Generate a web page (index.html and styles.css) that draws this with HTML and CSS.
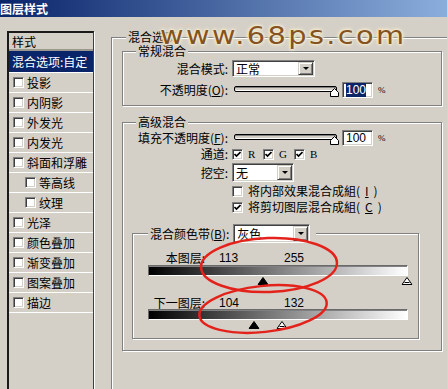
FILE: index.html
```html
<!DOCTYPE html>
<html lang="zh-CN">
<head>
    <meta charset="UTF-8">
    <meta name="viewport" content="width=device-width, initial-scale=1.0">
    <title>图层样式</title>
    <link rel="stylesheet" href="styles.css">
</head>
<body>
    <div class="titlebar">图层样式</div>

    <div class="dialog">
        <div class="style-list">
            <div class="list-head">样式</div>
            <div class="list-item selected">混合选项:自定</div>
            <div class="list-item"><span class="box"></span>投影</div>
            <div class="list-item"><span class="box"></span>内阴影</div>
            <div class="list-item"><span class="box"></span>外发光</div>
            <div class="list-item"><span class="box"></span>内发光</div>
            <div class="list-item"><span class="box"></span>斜面和浮雕</div>
            <div class="list-item sub"><span class="box"></span>等高线</div>
            <div class="list-item sub"><span class="box"></span>纹理</div>
            <div class="list-item"><span class="box"></span>光泽</div>
            <div class="list-item"><span class="box"></span>颜色叠加</div>
            <div class="list-item"><span class="box"></span>渐变叠加</div>
            <div class="list-item"><span class="box"></span>图案叠加</div>
            <div class="list-item"><span class="box"></span>描边</div>
        </div>

        <fieldset class="group main">
            <legend>混合选项</legend>

            <fieldset class="group general">
                <legend>常规混合</legend>
                <div class="form-grid general-grid">
                    <label>混合模式:</label>
                    <div class="combo mode"><span>正常</span><i class="drop"></i></div>

                    <label>不透明度(<u>O</u>):</label>
                    <div class="slider-row">
                        <div class="slider">
                            <span class="track"></span>
                            <svg class="thumb" width="9" height="9" viewBox="0 0 9 9"><path d="M4.5 0.5 L8.5 4.5 V8.5 H0.5 V4.5 Z" fill="#fff" stroke="#000"/></svg>
                        </div>
                        <div class="num"><span class="sel">100</span></div>
                        <span class="pct">%</span>
                    </div>
                </div>
            </fieldset>

            <fieldset class="group advanced">
                <legend>高级混合</legend>
                <div class="form-grid advanced-grid">
                    <label>填充不透明度(<u>F</u>):</label>
                    <div class="slider-row">
                        <div class="slider">
                            <span class="track"></span>
                            <svg class="thumb" width="9" height="9" viewBox="0 0 9 9"><path d="M4.5 0.5 L8.5 4.5 V8.5 H0.5 V4.5 Z" fill="#fff" stroke="#000"/></svg>
                        </div>
                        <div class="num">100</div>
                        <span class="pct">%</span>
                    </div>

                    <label>通道:</label>
                    <div class="channels">
                        <span class="cb on"><svg width="7" height="7" viewBox="0 0 7 7"><path d="M0.5 3 L2.5 5 L6.5 1" fill="none" stroke="#000" stroke-width="1.7"/></svg></span><span class="ch">R</span>
                        <span class="cb on"><svg width="7" height="7" viewBox="0 0 7 7"><path d="M0.5 3 L2.5 5 L6.5 1" fill="none" stroke="#000" stroke-width="1.7"/></svg></span><span class="ch">G</span>
                        <span class="cb on"><svg width="7" height="7" viewBox="0 0 7 7"><path d="M0.5 3 L2.5 5 L6.5 1" fill="none" stroke="#000" stroke-width="1.7"/></svg></span><span class="ch">B</span>
                    </div>

                    <label>挖空:</label>
                    <div class="combo knockout"><span>无</span><i class="drop"></i></div>

                    <div class="option"><span class="cb"></span>将内部效果混合成組(<u>I</u>)</div>
                    <div class="option"><span class="cb on"><svg width="7" height="7" viewBox="0 0 7 7"><path d="M0.5 3 L2.5 5 L6.5 1" fill="none" stroke="#000" stroke-width="1.7"/></svg></span>将剪切图层混合成組(<u>C</u>)</div>
                </div>

                <fieldset class="group band">
                    <legend>
                        <span>混合颜色带(<u>B</u>):</span>
                        <div class="combo gray"><span>灰色</span><i class="drop"></i></div>
                    </legend>

                    <div class="band-row first">
                        <span class="band-label">本图层:</span>
                        <span class="band-val">113</span>
                        <span class="band-val">255</span>
                    </div>
                    <div class="band-bar"></div>
                    <div class="band-thumbs">
                        <svg class="mark" style="left:44.3%" width="11" height="8" viewBox="0 0 11 8"><path d="M5.5 0.5 L10.5 7.5 H0.5 Z" fill="#000" stroke="#000"/></svg>
                        <svg class="mark" style="left:100%" width="11" height="8" viewBox="0 0 11 8"><path d="M5.5 0.5 L10.5 7.5 H0.5 Z" fill="#fff" stroke="#000"/><path d="M3 5.5 H8" stroke="#000"/></svg>
                    </div>

                    <div class="band-row">
                        <span class="band-label">下一图层:</span>
                        <span class="band-val">104</span>
                        <span class="band-val">132</span>
                    </div>
                    <div class="band-bar"></div>
                    <div class="band-thumbs">
                        <svg class="mark" style="left:40.8%" width="11" height="8" viewBox="0 0 11 8"><path d="M5.5 0.5 L10.5 7.5 H0.5 Z" fill="#000" stroke="#000"/></svg>
                        <svg class="mark" style="left:51.8%" width="11" height="8" viewBox="0 0 11 8"><path d="M5.5 0.5 L10.5 7.5 H0.5 Z" fill="#fff" stroke="#000"/><path d="M3 5.5 H8" stroke="#000"/></svg>
                    </div>
                </fieldset>
            </fieldset>
        </fieldset>
    </div>

    <div class="watermark">www.68ps.com</div>

    <svg class="marks" width="447" height="389" viewBox="0 0 447 389">
        <ellipse cx="269" cy="265" rx="68" ry="27" transform="rotate(-2 269 265)" fill="none" stroke="#e3231b" stroke-width="2.5"/>
        <ellipse cx="263" cy="309" rx="64" ry="23" transform="rotate(-6 263 309)" fill="none" stroke="#e3231b" stroke-width="2.5"/>
    </svg>
</body>
</html>
```

FILE: styles.css
```css
* { box-sizing: border-box; }
body { margin: 0; width: 447px; height: 389px; overflow: hidden; position: relative; background: #d4d0c8; color: #000; font-family: "Noto Sans CJK SC", "Liberation Sans", sans-serif; font-size: 12px; line-height: 14px; }
u { text-decoration: underline; text-underline-offset: 1px; }

.titlebar { height: 17px; line-height: 17px; background: linear-gradient(to right, #0a246a, #8aaedc); color: #fff; font-weight: bold; font-size: 12px; }

.dialog { display: flex; align-items: flex-start; gap: 17px; padding: 14px 0 0 7px; }

/* left style list */
.style-list { flex: none; width: 87px; height: 380px; border-style: solid; border-width: 2px 1px 1px 2px; border-color: #1a1a1a #404040 #404040 #1a1a1a; box-shadow: 1px 1px 0 #fff; }
.list-head { height: 18px; line-height: 18px; padding-left: 3px; border-bottom: 2px solid #9c9890; }
.list-item { display: flex; align-items: center; height: 20px; padding-left: 4px; border-bottom: 1px solid #fff; white-space: nowrap; }
.list-item.selected { height: 22px; padding-left: 3px; background: #0a246a; color: #fff; }
.list-item.sub { padding-left: 16px; }
.box, .cb { flex: none; display: inline-flex; align-items: center; justify-content: center; width: 11px; height: 11px; background: #fff; border: 1px solid; border-color: #808080 #fff #fff #808080; box-shadow: inset 1px 1px 0 #404040, inset -1px -1px 0 #d4d0c8; }
.box { margin-right: 3px; }

/* group boxes */
.group { margin: 0; padding: 0; min-width: 0; border: 1px solid #808080; box-shadow: inset 1px 1px 0 #fff, 1px 1px 0 #fff; }
.group > legend { padding: 0 2px; line-height: 12px; background: #d4d0c8; white-space: nowrap; }
.main { flex: none; width: 350px; height: 420px; padding: 2px 0 0 10px; }
.main > legend { margin-left: 4px; }
.general { width: 320px; padding-bottom: 7px; }
.general > legend, .advanced > legend { margin-left: 13px; }
.advanced { width: 320px; margin-top: 10px; padding-bottom: 11px; }

.form-grid { display: grid; grid-template-columns: 105px auto; column-gap: 4px; align-items: center; }
.form-grid label { text-align: right; white-space: nowrap; }
.general-grid { grid-template-rows: 17px 17px; row-gap: 4px; margin-top: 3px; }
.advanced-grid { grid-template-rows: 17px 16px 21px 16px 16px; margin-top: 1px; }

.combo { display: flex; align-items: center; justify-content: space-between; height: 17px; padding: 1px; background: #fff; border: 1px solid; border-color: #808080 #fff #fff #808080; box-shadow: inset 1px 1px 0 #404040, inset -1px -1px 0 #d4d0c8; }
.combo span { padding-left: 2px; line-height: 13px; }
.combo.mode { width: 83px; }
.combo.knockout { width: 62px; height: 19px; }
.combo.gray { width: 77px; height: 19px; }
.drop { display: flex; align-items: center; justify-content: center; width: 15px; height: 100%; background: #d4d0c8; border: 1px solid; border-color: #d4d0c8 #404040 #404040 #d4d0c8; box-shadow: inset 1px 1px 0 #fff, inset -1px -1px 0 #808080; }
.drop::after { content: ""; border-left: 3px solid transparent; border-right: 3px solid transparent; border-top: 3px solid #000; }

.slider-row { display: flex; align-items: center; }
.slider { position: relative; width: 107px; height: 17px; }
.track { display: block; height: 6px; margin: 5px 2px 0 2px; background: #d4d0c8; border: 1px solid #000; border-radius: 2px; box-shadow: inset 0 1px 0 #808080, inset 0 -1px 0 #fff; }
.thumb { position: absolute; right: 0; top: 7px; }
.num { width: 31px; height: 16px; margin-left: 3px; padding: 1px 0 0 3px; background: #fff; border: 1px solid; border-color: #808080 #fff #fff #808080; box-shadow: inset 1px 1px 0 #404040, inset -1px -1px 0 #d4d0c8; font-family: "Liberation Sans", sans-serif; font-size: 12px; line-height: 12px; }
.sel { background: #0a246a; color: #fff; }
.pct { margin-left: 5px; font-family: "Liberation Serif", serif; font-size: 9px; }

.channels { display: flex; align-items: center; }
.ch { width: 20px; padding-left: 5px; font-family: "Liberation Serif", serif; font-size: 11px; }
.option { grid-column: 2; display: flex; align-items: center; gap: 5px; white-space: nowrap; }

/* blend band */
.band { width: 287px; margin: 9px 0 0 9px; padding: 0 0 9px 0; }
.band > legend { display: flex; align-items: center; gap: 4px; margin-left: 15px; padding: 0 6px 0 2px; line-height: 19px; }
.band-row { display: flex; align-items: center; height: 15px; margin-top: 7px; }
.band-thumbs + .band-row { margin-top: 11px; height: 13px; }
.band-label { width: 72px; text-align: right; }
.band-val { width: 65px; padding-left: 14px; font-family: "Liberation Sans", sans-serif; }
.band-bar { width: 260px; height: 11px; margin-left: 15px; background: linear-gradient(to right, #000, #fff); border: 1px solid; border-color: #6a6a6a #fff #fff #6a6a6a; box-shadow: inset 0 1px 0 #808080; }
.band-thumbs { position: relative; width: 259px; height: 8px; margin: 1px 0 0 15px; }
.mark { position: absolute; top: 0; transform: translateX(-50%); }

/* overlays */
.watermark { position: absolute; left: 160px; top: 24px; transform: scaleX(1.2); transform-origin: left top; font-family: "DejaVu Sans", sans-serif; font-size: 24px; line-height: 24px; letter-spacing: 2px; color: #84531f; text-shadow: 0 0 1px #f4ecd6, 0 0 2px #f4ecd6, 0 0 2px #f4ecd6, 0 0 3px #efe5c8, 0 0 4px #efe5c8, 0 0 4px #efe5c8; }
.marks { position: absolute; left: 0; top: 0; pointer-events: none; }
```
